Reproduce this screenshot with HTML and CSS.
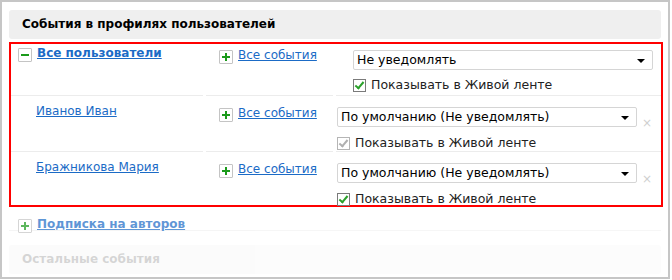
FILE: index.html
```html
<!DOCTYPE html>
<html lang="ru">
<head>
    <meta charset="UTF-8">
    <title>События в профилях пользователей</title>
    <link rel="stylesheet" href="styles.css">
</head>
<body>
    <div class="frame">
        <div class="section-head">События в профилях пользователей</div>

        <div class="users">
            <div class="row row-all">
                <div class="cell cell-user">
                    <span class="toggle toggle-minus"></span>
                    <a href="#" class="user-link user-all">Все пользователи</a>
                </div>
                <div class="cell cell-events">
                    <span class="toggle toggle-plus"></span>
                    <a href="#" class="user-link">Все события</a>
                </div>
                <div class="cell cell-notify">
                    <div class="select">Не уведомлять</div>
                    <label class="check"><span class="box"></span>Показывать в Живой ленте</label>
                </div>
            </div>

            <div class="row row-one">
                <div class="cell cell-user">
                    <a href="#" class="user-link">Иванов Иван</a>
                </div>
                <div class="cell cell-events">
                    <span class="toggle toggle-plus"></span>
                    <a href="#" class="user-link">Все события</a>
                </div>
                <div class="cell cell-notify">
                    <div class="select-line">
                        <div class="select">По умолчанию (Не уведомлять)</div>
                        <span class="remove">&times;</span>
                    </div>
                    <label class="check check-off"><span class="box"></span>Показывать в Живой ленте</label>
                </div>
            </div>

            <div class="row row-one row-last">
                <div class="cell cell-user">
                    <a href="#" class="user-link">Бражникова Мария</a>
                </div>
                <div class="cell cell-events">
                    <span class="toggle toggle-plus"></span>
                    <a href="#" class="user-link">Все события</a>
                </div>
                <div class="cell cell-notify">
                    <div class="select-line">
                        <div class="select">По умолчанию (Не уведомлять)</div>
                        <span class="remove">&times;</span>
                    </div>
                    <label class="check"><span class="box"></span>Показывать в Живой ленте</label>
                </div>
            </div>
        </div>

        <div class="authors">
            <span class="toggle toggle-plus"></span>
            <a href="#" class="user-link user-all">Подписка на авторов</a>
        </div>

        <div class="section-head section-other">Остальные события</div>
    </div>
</body>
</html>
```

FILE: styles.css
```css
body {
    margin: 0;
    font-family: "DejaVu Sans", Verdana, sans-serif;
    font-size: 12px;
    color: #000;
    background: #fff;
}
.frame {
    width: 670px;
    height: 279px;
    border: 2px solid #c6c6c6;
    padding: 8px 7px 0 7px;
    box-sizing: border-box;
    overflow: hidden;
}
.section-head {
    width: 652px;
    height: 29px;
    background: #efefef;
    border-radius: 3px;
    padding: 7px 0 0 13px;
    box-sizing: border-box;
    font-weight: bold;
    font-size: 12px;
    color: #000;
}
.users {
    margin-top: 3px;
    border: 2px solid #f00;
    width: 654px;
    box-sizing: border-box;
}
.row {
    display: grid;
    grid-template-columns: 192px 127px 1fr;
    column-gap: 3px;
    height: 56px;
}
.row-all {
    height: 52px;
}
.row-last {
    height: 53px;
}
.cell {
    border-bottom: 1px solid #ececec;
    display: flex;
    align-items: flex-start;
    box-sizing: border-box;
}
.row-last .cell {
    border-bottom: none;
}
.cell-user {
    padding: 2px 0 0 7px;
}
.row-one .cell-user {
    padding: 8px 0 0 25px;
}
.cell-events {
    padding: 4px 0 0 13px;
}
.row-one .cell-events {
    padding-top: 10px;
}
.cell-notify {
    flex-direction: column;
    padding: 6px 0 0 17px;
}
.row-one .cell-notify {
    padding: 11px 0 0 1px;
}
.user-link {
    color: #1b6bc6;
    text-decoration: underline;
    line-height: 15px;
}
.user-all {
    font-weight: bold;
    margin-left: 5px;
}
.cell-events .user-link {
    margin-left: 5px;
}
.toggle {
    position: relative;
    display: inline-block;
    width: 14px;
    height: 14px;
    border: 1px solid #c4c4c4;
    border-radius: 1px;
    background: #fff;
    box-sizing: border-box;
    flex: none;
    margin-top: 2px;
}
.toggle::before,
.toggle::after {
    content: "";
    position: absolute;
    background: #1b9a1b;
}
.toggle::before {
    left: 2px;
    top: 5px;
    width: 8px;
    height: 2px;
}
.toggle-plus::after {
    left: 5px;
    top: 2px;
    width: 2px;
    height: 8px;
}
.select-line {
    display: flex;
    align-items: flex-start;
    height: 20px;
}
.select {
    position: relative;
    width: 300px;
    height: 20px;
    border: 1px solid #d5d5d5;
    border-radius: 2px;
    box-sizing: border-box;
    padding: 1px 0 0 3px;
    font-size: 12.5px;
    line-height: 16px;
    color: #000;
}
.select::after {
    content: "";
    position: absolute;
    right: 7px;
    top: 8px;
    border-left: 4px solid transparent;
    border-right: 4px solid transparent;
    border-top: 4px solid #000;
}
.remove {
    color: #cfcfcf;
    font-size: 12px;
    margin: 12px 0 0 5px;
    line-height: 8px;
}
.check {
    display: flex;
    align-items: center;
    margin-top: 8px;
    font-size: 12.5px;
    color: #222;
    line-height: 14px;
}
.row-one .check {
    margin-top: 9px;
}
.check .box {
    position: relative;
    width: 13px;
    height: 13px;
    border: 1px solid #7a7a7a;
    box-sizing: border-box;
    margin-right: 5px;
    background: #fff;
}
.check .box::after {
    content: "";
    position: absolute;
    left: 3px;
    top: 0;
    width: 3px;
    height: 7px;
    border-right: 2px solid #2aa12a;
    border-bottom: 2px solid #2aa12a;
    transform: rotate(40deg);
}
.check-off .box {
    border-color: #b5b5b5;
}
.check-off .box::after {
    border-color: #b0b0b0;
}
.authors {
    display: flex;
    align-items: flex-start;
    padding: 10px 0 0 9px;
    height: 24px;
    width: 652px;
    box-sizing: border-box;
    border-bottom: 1px solid #f2f2f2;
    opacity: 0.7;
}
.section-other {
    margin-top: 14px;
    opacity: 0.2;
    color: #333;
}
```
